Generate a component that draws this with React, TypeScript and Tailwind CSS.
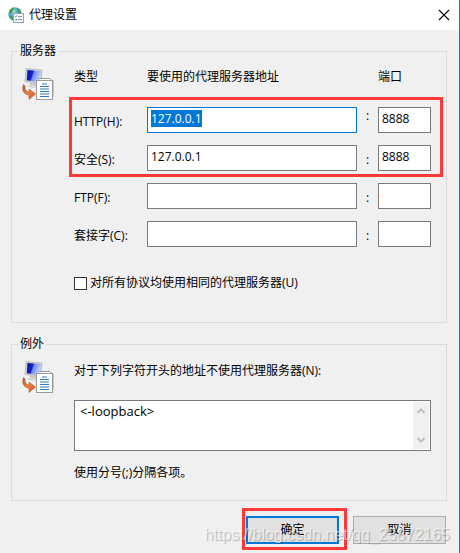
import { useEffect, useRef, useState } from "react";

const fields = [
  { id: "http", label: "HTTP(H):", address: "127.0.0.1", port: "8888" },
  { id: "secure", label: "安全(S):", address: "127.0.0.1", port: "8888" },
  { id: "ftp", label: "FTP(F):", address: "", port: "" },
  { id: "socks", label: "套接字(C):", address: "", port: "" },
];

function GlobeIcon() {
  return (
    <svg width="16" height="16" viewBox="0 0 16 16" aria-hidden="true">
      <defs>
        <radialGradient id="globe" cx="0.35" cy="0.3" r="0.8">
          <stop offset="0" stopColor="#b5e0f5" />
          <stop offset="0.5" stopColor="#4a9bd0" />
          <stop offset="1" stopColor="#1b4f8c" />
        </radialGradient>
      </defs>
      <circle cx="7" cy="7" r="6.7" fill="url(#globe)" />
      <path
        d="M1 4.5C2 2 4 .7 6 .5c1 .8.4 1.8-.7 2.3C4.500 3.500 4.800 5 3.800 6 3.300 7.500 2 7 1.400 6zM9 1.200c2 .6 3.600 2 4.300 4L11 5.500 9.400 4zM2.500 9.500l2.300-.5 1 2-.8 2.200C3.800 12.500 2.800 11 2.500 9.500z"
        fill="#3fa648"
      />
      <rect x="5.500" y="6.500" width="10" height="9" fill="#f7f9fa" stroke="#9aa5ad" />
      <path d="M7 9l.8.8L9 8.400M7 12.500l.8.8L9 12" fill="none" stroke="#2c8fc0" />
      <path d="M10 9.500h4M10 12.500h4" stroke="#8a979e" />
    </svg>
  );
}

function ProxyIcon() {
  return (
    <svg
      width="32"
      height="32"
      viewBox="0 0 32 32"
      className="shrink-0"
      aria-hidden="true"
    >
      <defs>
        <linearGradient id="screen" x1="0" y1="0" x2="1" y2="0.3">
          <stop offset="0" stopColor="#0a12a0" />
          <stop offset="0.45" stopColor="#1420c8" />
          <stop offset="0.55" stopColor="#6f8ff0" />
          <stop offset="1" stopColor="#b9cdfa" />
        </linearGradient>
        <linearGradient id="arrow" x1="0" y1="0" x2="1" y2="1">
          <stop offset="0" stopColor="#a8604a" />
          <stop offset="0.5" stopColor="#ee7b3c" />
          <stop offset="1" stopColor="#d9541a" />
        </linearGradient>
      </defs>
      <path d="M8 15l6 1v3l-6-1.500z" fill="#b4b7ba" />
      <path d="M5 17.500l4-1.500 6 1v2.500l-5 .5z" fill="#d5d7d9" />
      <path d="M4 .5l16 1.500-1 14L3 13.500z" fill="#c9cdd2" stroke="#a9adb3" strokeWidth="0.6" />
      <path d="M5.500 2l13 1.300-.8 11L4.800 12.200z" fill="url(#screen)" />
      <path
        d="M1.500 16.500C-.5 21 1 26.500 7 27.200V31.500l6.500-5.500L7 21v3C4 23.500 2.300 21 3.200 18z"
        fill="url(#arrow)"
        stroke="#a4532c"
        strokeWidth="0.5"
      />
      <path d="M16.500 10.500h11.500l2 2H31v16" fill="#fff" stroke="#9b9b9b" />
      <rect x="14.500" y="12.500" width="16" height="19" fill="#fff" stroke="#9b9b9b" />
      <path d="M20 16h5M18 18.500h9M18 21h9M18 23.500h9M18 26h9M18 28.500h9" stroke="#2f7cc4" strokeWidth="1.2" />
    </svg>
  );
}

export default function App() {
  const [values, setValues] = useState(fields);
  const [sameProxy, setSameProxy] = useState(false);
  const [exceptions, setExceptions] = useState("<-loopback>");
  const httpRef = useRef<HTMLInputElement>(null);

  useEffect(() => {
    httpRef.current?.focus();
    httpRef.current?.select();
  }, []);

  const update = (id: string, key: "address" | "port", value: string) => {
    setValues(values.map((v) => (v.id === id ? { ...v, [key]: value } : v)));
  };

  return (
    <div className="flex min-h-screen flex-col border-r border-[#1f7ac0] bg-[#f0f0f0] font-['Open_Sans','Noto_Sans_CJK_SC',sans-serif] text-xs leading-[18px] text-black">
      <header className="flex h-[30px] items-center gap-[5px] bg-white pr-[9px] pl-2">
        <GlobeIcon />
        <h1 className="flex-1">代理设置</h1>
        <button type="button" aria-label="关闭">
          <svg width="12" height="12" viewBox="0 0 12 12">
            <path d="M1 1l10 10M11 1L1 11" stroke="#000" strokeWidth="1.1" />
          </svg>
        </button>
      </header>

      <main className="pt-3 pr-3 pl-[11px]">
        <fieldset className="border border-[#dcdcdc] pr-[15px] pb-[30px] pl-[6px]">
          <legend className="px-[2px]">服务器</legend>
          <div className="flex gap-5 pt-2 pl-1">
            <ProxyIcon />
            <div className="flex-1">
              <div className="grid grid-cols-[73px_1fr_21px_53px]">
                <span>类型</span>
                <span className="col-span-2">要使用的代理服务器地址</span>
                <span>端口</span>
              </div>
              <div className="relative mt-[21px] flex flex-col gap-3">
                {values.map((field) => (
                  <div
                    key={field.id}
                    className="grid grid-cols-[73px_1fr_21px_53px] items-center"
                  >
                    <label htmlFor={field.id} className="pt-1">
                      {field.label}
                    </label>
                    <input
                      id={field.id}
                      ref={field.id === "http" ? httpRef : undefined}
                      value={field.address}
                      onChange={(e) => update(field.id, "address", e.target.value)}
                      className="h-[26px] w-full min-w-0 border border-[#7a7a7a] bg-white px-[3px] pb-1 outline-none selection:bg-[#0078d7] selection:text-white focus:border-[#0078d7]"
                    />
                    <span
                      className={
                        field.id === "http"
                          ? "self-start text-center"
                          : "pt-1 text-center"
                      }
                    >
                      :
                    </span>
                    <input
                      aria-label={`${field.label} 端口`}
                      value={field.port}
                      onChange={(e) => update(field.id, "port", e.target.value)}
                      className="h-[26px] w-full min-w-0 border border-[#7a7a7a] bg-white px-[3px] pb-1 outline-none focus:border-[#0078d7]"
                    />
                  </div>
                ))}
                {/* highlight over the first two rows */}
                <div className="pointer-events-none absolute -top-[10px] -right-3 -left-[5px] h-[80px] border-3 border-[#ff3838]" />
              </div>
              <label className="mt-[27px] flex items-center gap-[3px]">
                <input
                  type="checkbox"
                  checked={sameProxy}
                  onChange={(e) => setSameProxy(e.target.checked)}
                  className="size-[13px] appearance-none border border-[#333] bg-white checked:bg-[#0078d7]"
                />
                对所有协议均使用相同的代理服务器(U)
              </label>
            </div>
          </div>
        </fieldset>

        <fieldset className="mt-3 border border-[#dcdcdc] pr-[15px] pb-[18px] pl-[6px]">
          <legend className="px-[2px]">例外</legend>
          <div className="flex gap-5 pt-2 pl-1">
            <ProxyIcon />
            <div className="flex-1 pt-px">
              <label htmlFor="exceptions" className="block">
                对于下列字符开头的地址不使用代理服务器(N):
              </label>
              <div className="mt-5 flex border border-[#7a7a7a] bg-white p-px">
                <textarea
                  id="exceptions"
                  value={exceptions}
                  onChange={(e) => setExceptions(e.target.value)}
                  className="h-[47px] min-w-0 flex-1 resize-none overflow-hidden px-1 text-[13px] leading-[18px] outline-none"
                />
                <div className="flex w-4 flex-col items-center justify-between bg-[#f0f0f0] py-[6px]">
                  <svg width="8" height="6" viewBox="0 0 8 6">
                    <path d="M.5 5L4 1.500 7.500 5" fill="none" stroke="#bfbfbf" strokeWidth="2" />
                  </svg>
                  <svg width="8" height="6" viewBox="0 0 8 6">
                    <path d="M.5 1L4 4.500 7.500 1" fill="none" stroke="#bfbfbf" strokeWidth="2" />
                  </svg>
                </div>
              </div>
              <p className="mt-[13px]">使用分号(;)分隔各项。</p>
            </div>
          </div>
        </fieldset>

        <footer className="relative mt-[15px] flex justify-end gap-[14px] pr-px">
          <div className="relative">
            <button
              type="button"
              className="h-7 w-[93px] border-2 border-[#0078d7] bg-[#e1e1e1]"
            >
              确定
            </button>
            <div className="pointer-events-none absolute -top-2 -right-2 -bottom-[6px] -left-1 border-3 border-[#ff3838]" />
          </div>
          <button
            type="button"
            className="h-7 w-[93px] border border-[#adadad] bg-[#e1e1e1]"
          >
            取消
          </button>
          <span className="pointer-events-none absolute -right-[3px] bottom-0 font-['Liberation_Sans',sans-serif] text-base leading-[18px] text-white/60 [text-shadow:1px_1px_1px_rgb(0_0_0/0.25)]">
            https://blog.csdn.net/qq_25872165
          </span>
        </footer>
      </main>
    </div>
  );
}
